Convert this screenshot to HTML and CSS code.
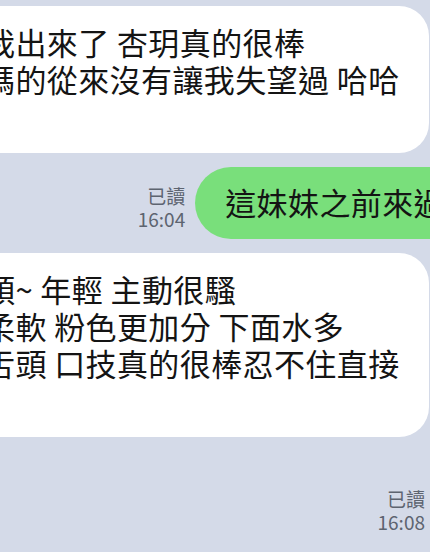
FILE: index.html
```html
<!DOCTYPE html>
<html lang="zh-Hant">
	<head>
		<meta charset="UTF-8" />
		<meta name="viewport" content="width=device-width, initial-scale=1.0" />
		<title>聊天</title>
		<link rel="stylesheet" href="styles.css">
	</head>
	<body>
		<div class="chat">
			<div class="row received">
				<div class="bubble white">
					<p>我出來了 杏玥真的很棒</p>
					<p>媽的從來沒有讓我失望過 哈哈</p>
					<p>&nbsp;</p>
				</div>
			</div>
			<div class="row sent">
				<div class="status">
					<span>已讀</span>
					<span>16:04</span>
				</div>
				<div class="bubble green">這妹妹之前來過</div>
			</div>
			<div class="row received second">
				<div class="bubble white">
					<p>頭~ 年輕 主動很騷</p>
					<p>柔軟 粉色更加分 下面水多</p>
					<p>舌頭 口技真的很棒忍不住直接</p>
					<p>&nbsp;</p>
				</div>
			</div>
			<div class="row sent last">
				<div class="status">
					<span>已讀</span>
					<span>16:08</span>
				</div>
			</div>
		</div>
	</body>
</html>
```
FILE: styles.css
```css
* {
	box-sizing: border-box;
}
html,
body {
	margin: 0;
	padding: 0;
	height: 100%;
}
body {
	background-color: #d4dae8;
	font-family: "Noto Sans CJK TC", "Noto Sans", sans-serif;
	color: #141414;
	overflow: hidden;
}
.chat {
	display: flex;
	flex-direction: column;
	padding-top: 6px;
	width: 430px;
	overflow: hidden;
}
.row {
	display: flex;
}
.received {
	padding-right: 1px;
}
.received .bubble {
	flex: 1;
	margin-left: -44px;
}
.second {
	margin-top: 14px;
}
.sent {
	justify-content: flex-end;
	align-items: flex-end;
	gap: 10px;
	margin-top: 14px;
}
.bubble {
	font-size: 31px;
	line-height: 37px;
	letter-spacing: 0.4px;
	white-space: nowrap;
}
.bubble p {
	margin: 0;
}
.white {
	background-color: #fff;
	border-radius: 30px;
	padding: 17px 20px 19px 28px;
}
.green {
	background-color: #79df7b;
	border-radius: 36px;
	padding: 16px 30px 18px;
	line-height: 38px;
	margin-right: -45px;
	flex-shrink: 0;
}
.status {
	display: flex;
	flex-direction: column;
	align-items: flex-end;
	font-size: 19px;
	line-height: 23px;
	color: #5d6470;
	margin-bottom: 9px;
}
.last {
	margin-top: 50px;
	padding-right: 5px;
}
.last .status {
	margin-bottom: 0;
}
```
